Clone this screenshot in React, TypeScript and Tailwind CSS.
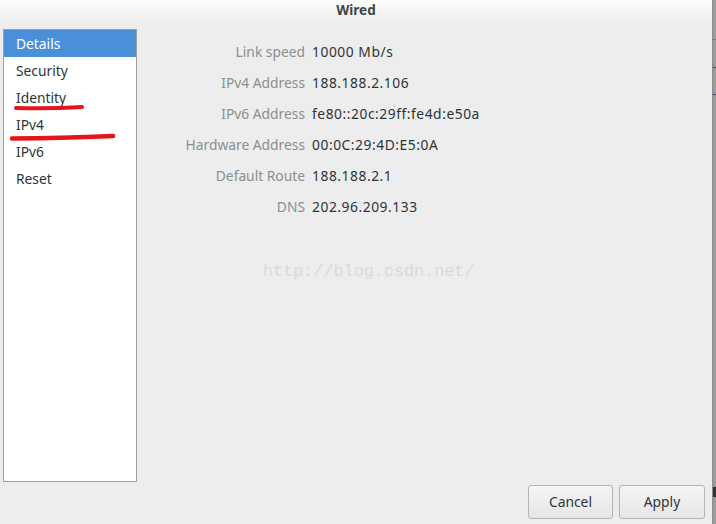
import React from "react";

const rows: [string, string][] = [
  ["Link speed", "10000 Mb/s"],
  ["IPv4 Address", "188.188.2.106"],
  ["IPv6 Address", "fe80::20c:29ff:fe4d:e50a"],
  ["Hardware Address", "00:0C:29:4D:E5:0A"],
  ["Default Route", "188.188.2.1"],
  ["DNS", "202.96.209.133"],
];

const side = ["Details", "Security", "Identity", "IPv4", "IPv6", "Reset"];

export default function App() {
  return (
    <div
      className="relative flex w-[716px] h-[524px] overflow-hidden text-[13.8px]"
      style={{ fontFamily: '"Noto Sans", "DejaVu Sans", sans-serif' }}
    >
      <div className="flex flex-col w-[712px] h-full bg-[#ededed]">
        <div className="h-[25px] flex items-start justify-center pt-[2px] bg-gradient-to-b from-[#fbfbfb] to-[#ededed] border-t border-[#ffffff]">
          <span className="font-bold text-[#3d4447] text-[13.5px] leading-[14px]">Wired</span>
        </div>
        <div className="flex flex-1 pt-[4px] pl-[3px]">
          <div className="relative w-[134px] h-[453px] bg-white border border-[#9e9e9e] flex flex-col">
            {side.map((s, i) => (
              <div
                key={s}
                className={
                  "h-[27px] flex items-center pl-[12px] pt-[2px] " +
                  (i === 0 ? "bg-[#4a90d9] text-white" : "text-[#2e3436]")
                }
              >
                {s}
              </div>
            ))}
            <svg className="absolute left-[-4px] top-[-30px]" width="140" height="200" viewBox="0 0 140 200">
              <path d="M16 108 Q50 109 82 107" stroke="#e8141c" strokeWidth="4" strokeLinecap="round" fill="none" />
              <path d="M12 138.5 Q60 138 113 136" stroke="#e8141c" strokeWidth="4.5" strokeLinecap="round" fill="none" />
            </svg>
          </div>
          <div className="pl-[35px] pt-[8px]">
            <div className="grid grid-cols-[133px_auto] gap-x-[7px]">
              {rows.map(([k, v]) => (
                <React.Fragment key={k}>
                  <div className="h-[31px] flex items-center justify-end text-[#8b8e8f]">{k}</div>
                  <div className="h-[31px] flex items-center text-[#2e3436] tracking-[0.55px]">{v}</div>
                </React.Fragment>
              ))}
            </div>
          </div>
        </div>
        <div className="flex justify-end gap-[6px] pr-[7px] mt-[3px] mb-[5px]">
          <button className="w-[85px] h-[34px] rounded-[3px] border border-[#b4b4b0] bg-gradient-to-b from-[#f6f6f6] to-[#e6e6e6] text-[#2e3436] text-[13.8px]">
            Cancel
          </button>
          <button className="w-[86px] h-[34px] rounded-[3px] border border-[#b4b4b0] bg-gradient-to-b from-[#f6f6f6] to-[#e6e6e6] text-[#2e3436] text-[13.8px]">
            Apply
          </button>
        </div>
      </div>
      <div className="relative w-[4px] h-full bg-[#9c9c9c] border-l border-[#8a8a8a]">
        <div className="absolute left-0 top-[39px] w-[4px] h-[1px] bg-[#777777]" />
        <div className="absolute left-0 top-[67px] w-[4px] h-[1px] bg-[#2f4a6a]" />
        <div className="absolute left-0 top-[94px] w-[4px] h-[1px] bg-[#2f4a6a]" />
        <div className="absolute left-0 top-[487px] w-[4px] h-[10px] bg-[#333333]" />
      </div>
      <div
        className="absolute left-[263px] top-[261px] text-[16.8px] text-[#dadad7] leading-[22px]"
        style={{ fontFamily: '"Liberation Mono", monospace' }}
      >
        http://blog.csdn.net/
      </div>
    </div>
  );
}
